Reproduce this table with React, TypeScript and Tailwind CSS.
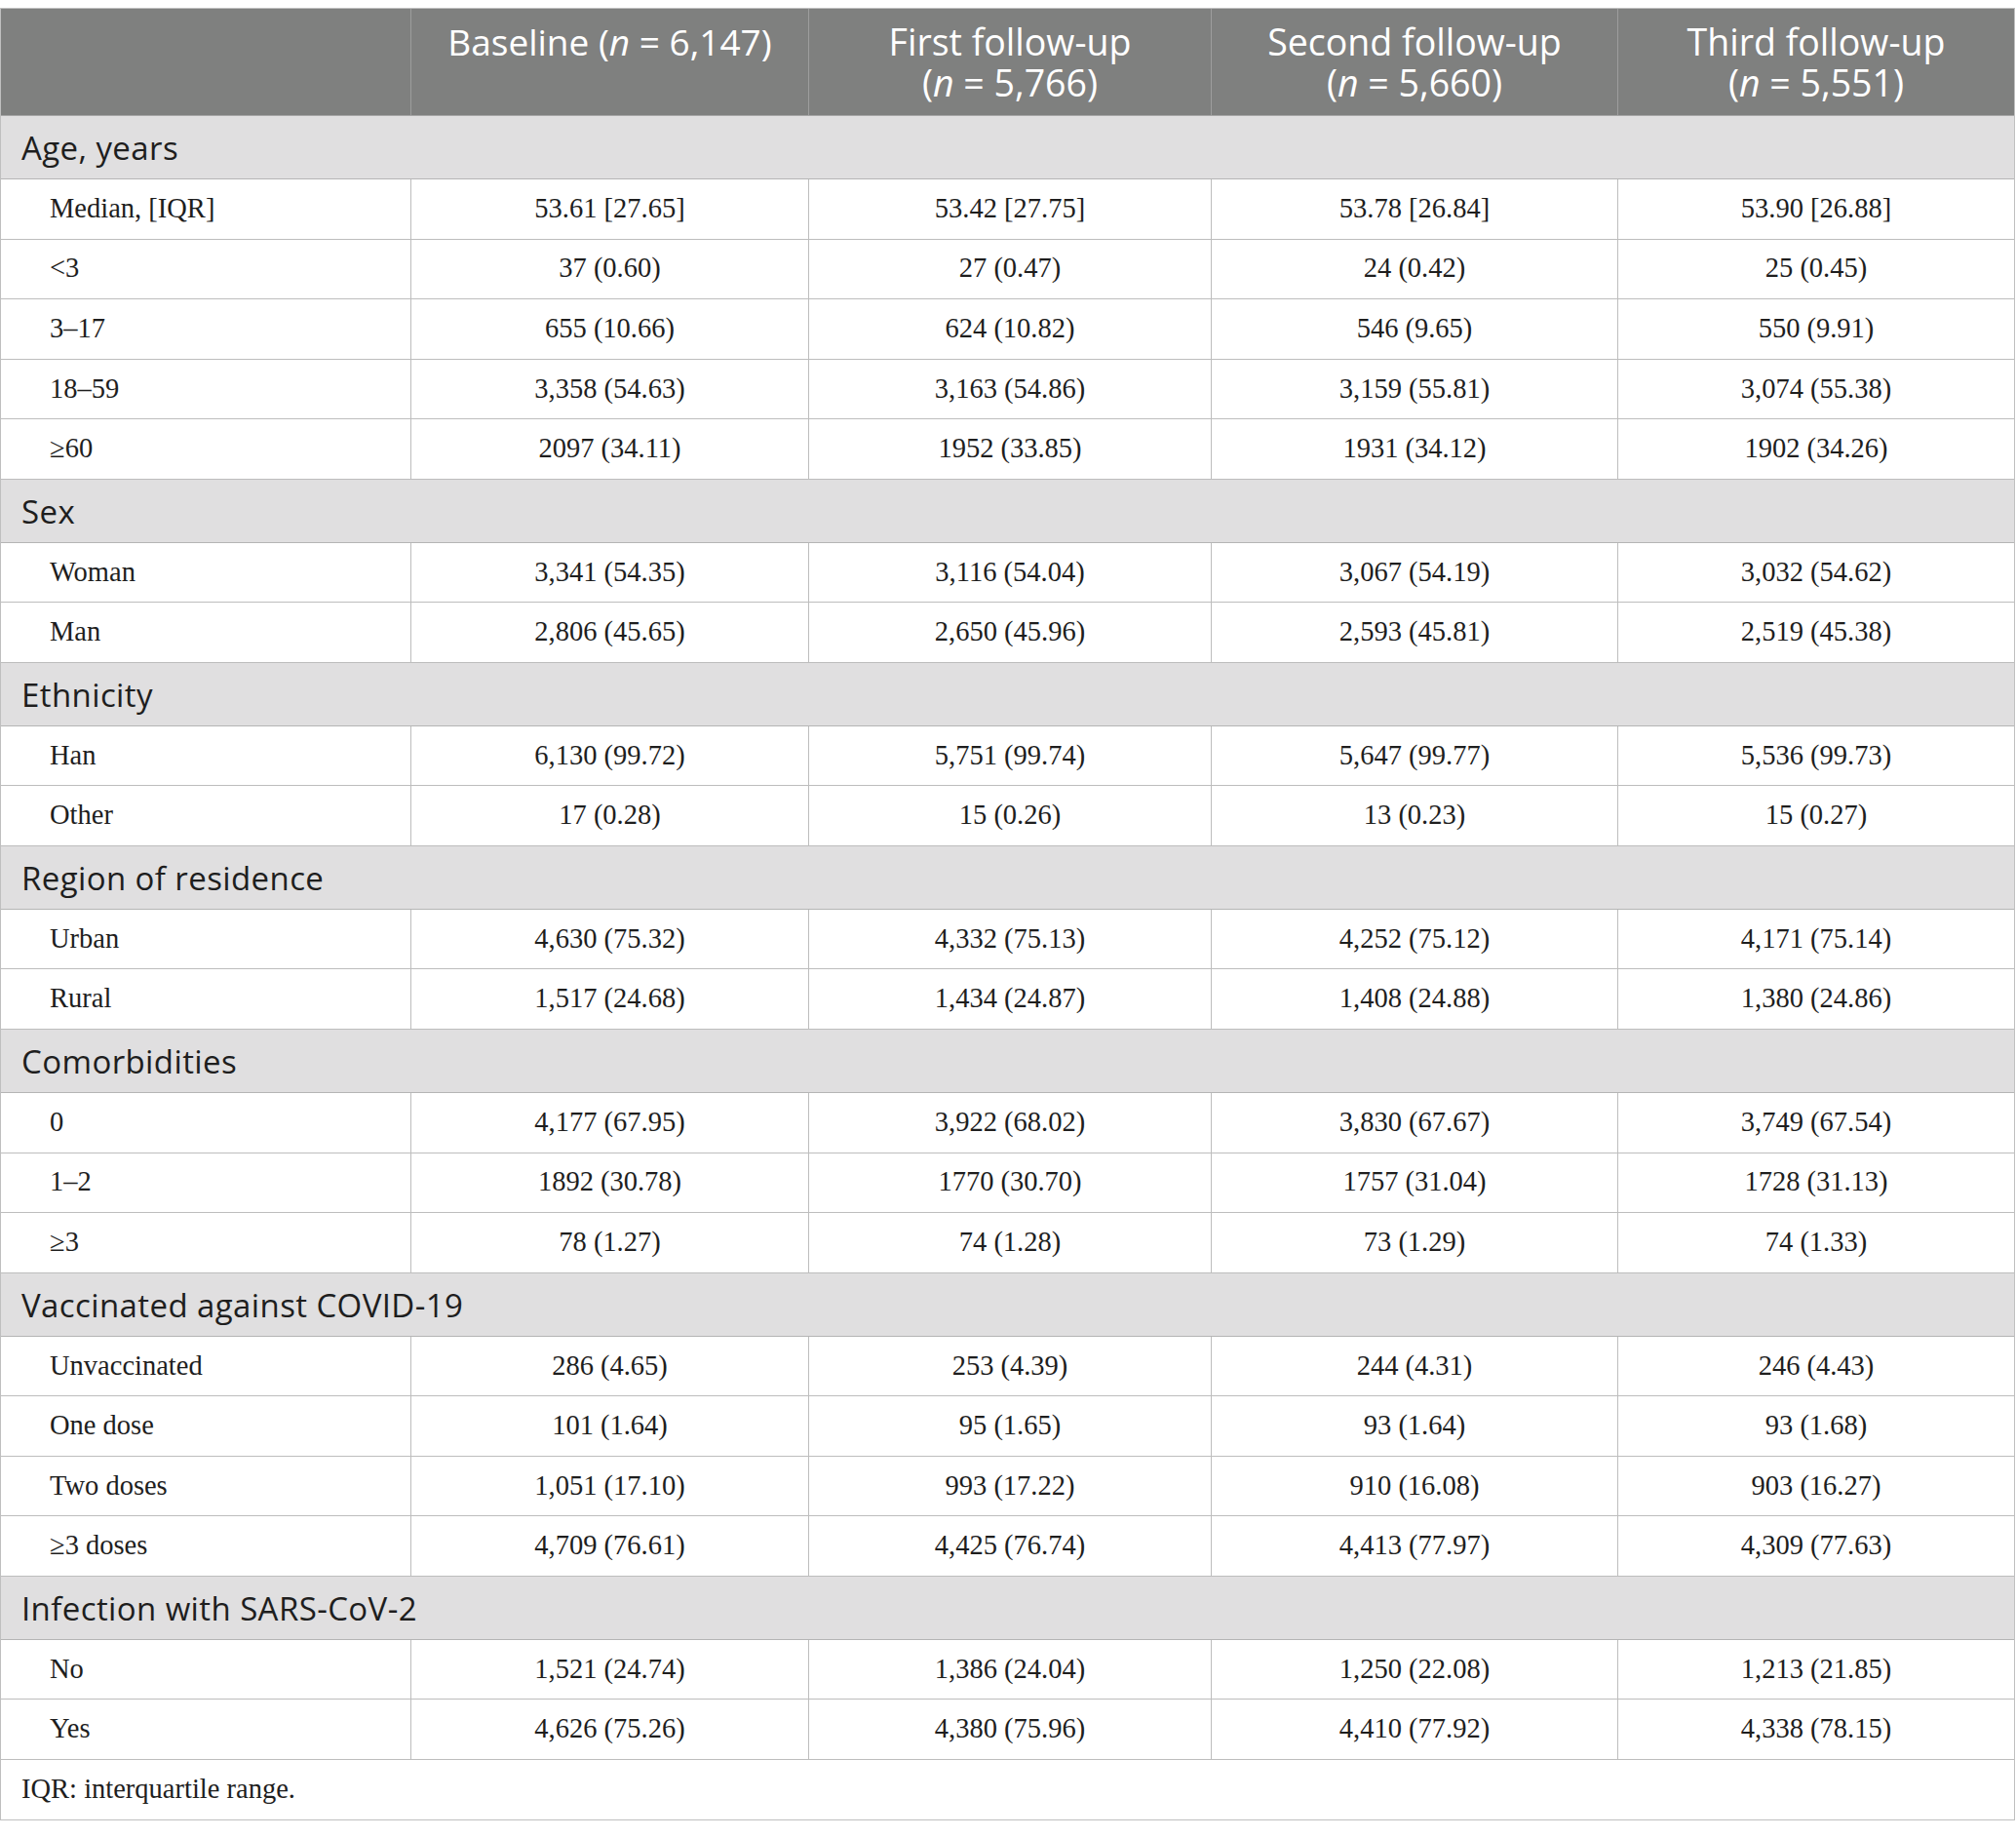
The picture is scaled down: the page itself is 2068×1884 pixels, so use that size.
import React from "react";

type Row = [string, string, string, string, string];
type Section = { title: string; rows: Row[] };

const sections: Section[] = [
  {
    title: "Age, years",
    rows: [
      ["Median, [IQR]", "53.61 [27.65]", "53.42 [27.75]", "53.78 [26.84]", "53.90 [26.88]"],
      ["<3", "37 (0.60)", "27 (0.47)", "24 (0.42)", "25 (0.45)"],
      ["3–17", "655 (10.66)", "624 (10.82)", "546 (9.65)", "550 (9.91)"],
      ["18–59", "3,358 (54.63)", "3,163 (54.86)", "3,159 (55.81)", "3,074 (55.38)"],
      ["≥60", "2097 (34.11)", "1952 (33.85)", "1931 (34.12)", "1902 (34.26)"],
    ],
  },
  {
    title: "Sex",
    rows: [
      ["Woman", "3,341 (54.35)", "3,116 (54.04)", "3,067 (54.19)", "3,032 (54.62)"],
      ["Man", "2,806 (45.65)", "2,650 (45.96)", "2,593 (45.81)", "2,519 (45.38)"],
    ],
  },
  {
    title: "Ethnicity",
    rows: [
      ["Han", "6,130 (99.72)", "5,751 (99.74)", "5,647 (99.77)", "5,536 (99.73)"],
      ["Other", "17 (0.28)", "15 (0.26)", "13 (0.23)", "15 (0.27)"],
    ],
  },
  {
    title: "Region of residence",
    rows: [
      ["Urban", "4,630 (75.32)", "4,332 (75.13)", "4,252 (75.12)", "4,171 (75.14)"],
      ["Rural", "1,517 (24.68)", "1,434 (24.87)", "1,408 (24.88)", "1,380 (24.86)"],
    ],
  },
  {
    title: "Comorbidities",
    rows: [
      ["0", "4,177 (67.95)", "3,922 (68.02)", "3,830 (67.67)", "3,749 (67.54)"],
      ["1–2", "1892 (30.78)", "1770 (30.70)", "1757 (31.04)", "1728 (31.13)"],
      ["≥3", "78 (1.27)", "74 (1.28)", "73 (1.29)", "74 (1.33)"],
    ],
  },
  {
    title: "Vaccinated against COVID-19",
    rows: [
      ["Unvaccinated", "286 (4.65)", "253 (4.39)", "244 (4.31)", "246 (4.43)"],
      ["One dose", "101 (1.64)", "95 (1.65)", "93 (1.64)", "93 (1.68)"],
      ["Two doses", "1,051 (17.10)", "993 (17.22)", "910 (16.08)", "903 (16.27)"],
      ["≥3 doses", "4,709 (76.61)", "4,425 (76.74)", "4,413 (77.97)", "4,309 (77.63)"],
    ],
  },
  {
    title: "Infection with SARS-CoV-2",
    rows: [
      ["No", "1,521 (24.74)", "1,386 (24.04)", "1,250 (22.08)", "1,213 (21.85)"],
      ["Yes", "4,626 (75.26)", "4,380 (75.96)", "4,410 (77.92)", "4,338 (78.15)"],
    ],
  },
];

const grid = "grid grid-cols-[421px_408px_413px_417px_406px]";
const sans = "font-['Open_Sans',sans-serif]";
const serif = "font-['Liberation_Serif','Times_New_Roman',serif]";

function HeadCell({ line1, n, last }: { line1: string; n?: string; last?: boolean }) {
  return (
    <div
      className={`flex flex-col items-center pt-[13px] text-[37.5px] font-normal leading-[42px] text-white ${
        last ? "" : "border-r border-[#9d9d9d]"
      }`}
    >
      <span>{line1}</span>
      <span>
        (<i>n</i> = {n})
      </span>
    </div>
  );
}

export default function App() {
  return (
    <div className="min-h-screen bg-white pt-[8px]">
      <div className="w-[2067px] border border-[#bfbfbf] text-[#1e1e1e]">
        {/* Header */}
        <div className={`${grid} ${sans} h-[110px] border-b border-[#a5a5a5] bg-[#7f807f]`}>
          <div className="border-r border-[#9d9d9d]" />
          <div className="flex justify-center border-r border-[#9d9d9d] pt-[13px] text-[37px] font-normal leading-[42px] text-white">
            <span>
              Baseline (<i>n</i> = 6,147)
            </span>
          </div>
          <HeadCell line1="First follow-up" n="5,766" />
          <HeadCell line1="Second follow-up" n="5,660" />
          <HeadCell line1="Third follow-up" n="5,551" last />
        </div>

        {sections.map((s) => (
          <div key={s.title}>
            <div
              className={`${sans} flex h-[65px] items-center border-b border-[#b5b5b5] bg-[#e0dfe0] pl-[21px] pt-[2px] text-[33px] tracking-[0.4px] text-[#1e1e1e]`}
            >
              {s.title}
            </div>
            {s.rows.map((r) => (
              <div key={r[0]} className={`${grid} ${serif} h-[61.55px] border-b border-[#bdbdbd] text-[28.5px]`}>
                <div className="flex items-center border-r border-[#bdbdbd] pl-[50px]">{r[0]}</div>
                <div className="flex items-center justify-center border-r border-[#bdbdbd]">{r[1]}</div>
                <div className="flex items-center justify-center border-r border-[#bdbdbd]">{r[2]}</div>
                <div className="flex items-center justify-center border-r border-[#bdbdbd]">{r[3]}</div>
                <div className="flex items-center justify-center">{r[4]}</div>
              </div>
            ))}
          </div>
        ))}

        {/* Footer */}
        <div className={`${serif} flex h-[61px] items-center pl-[21px] text-[28.5px]`}>
          IQR: interquartile range.
        </div>
      </div>
    </div>
  );
}
